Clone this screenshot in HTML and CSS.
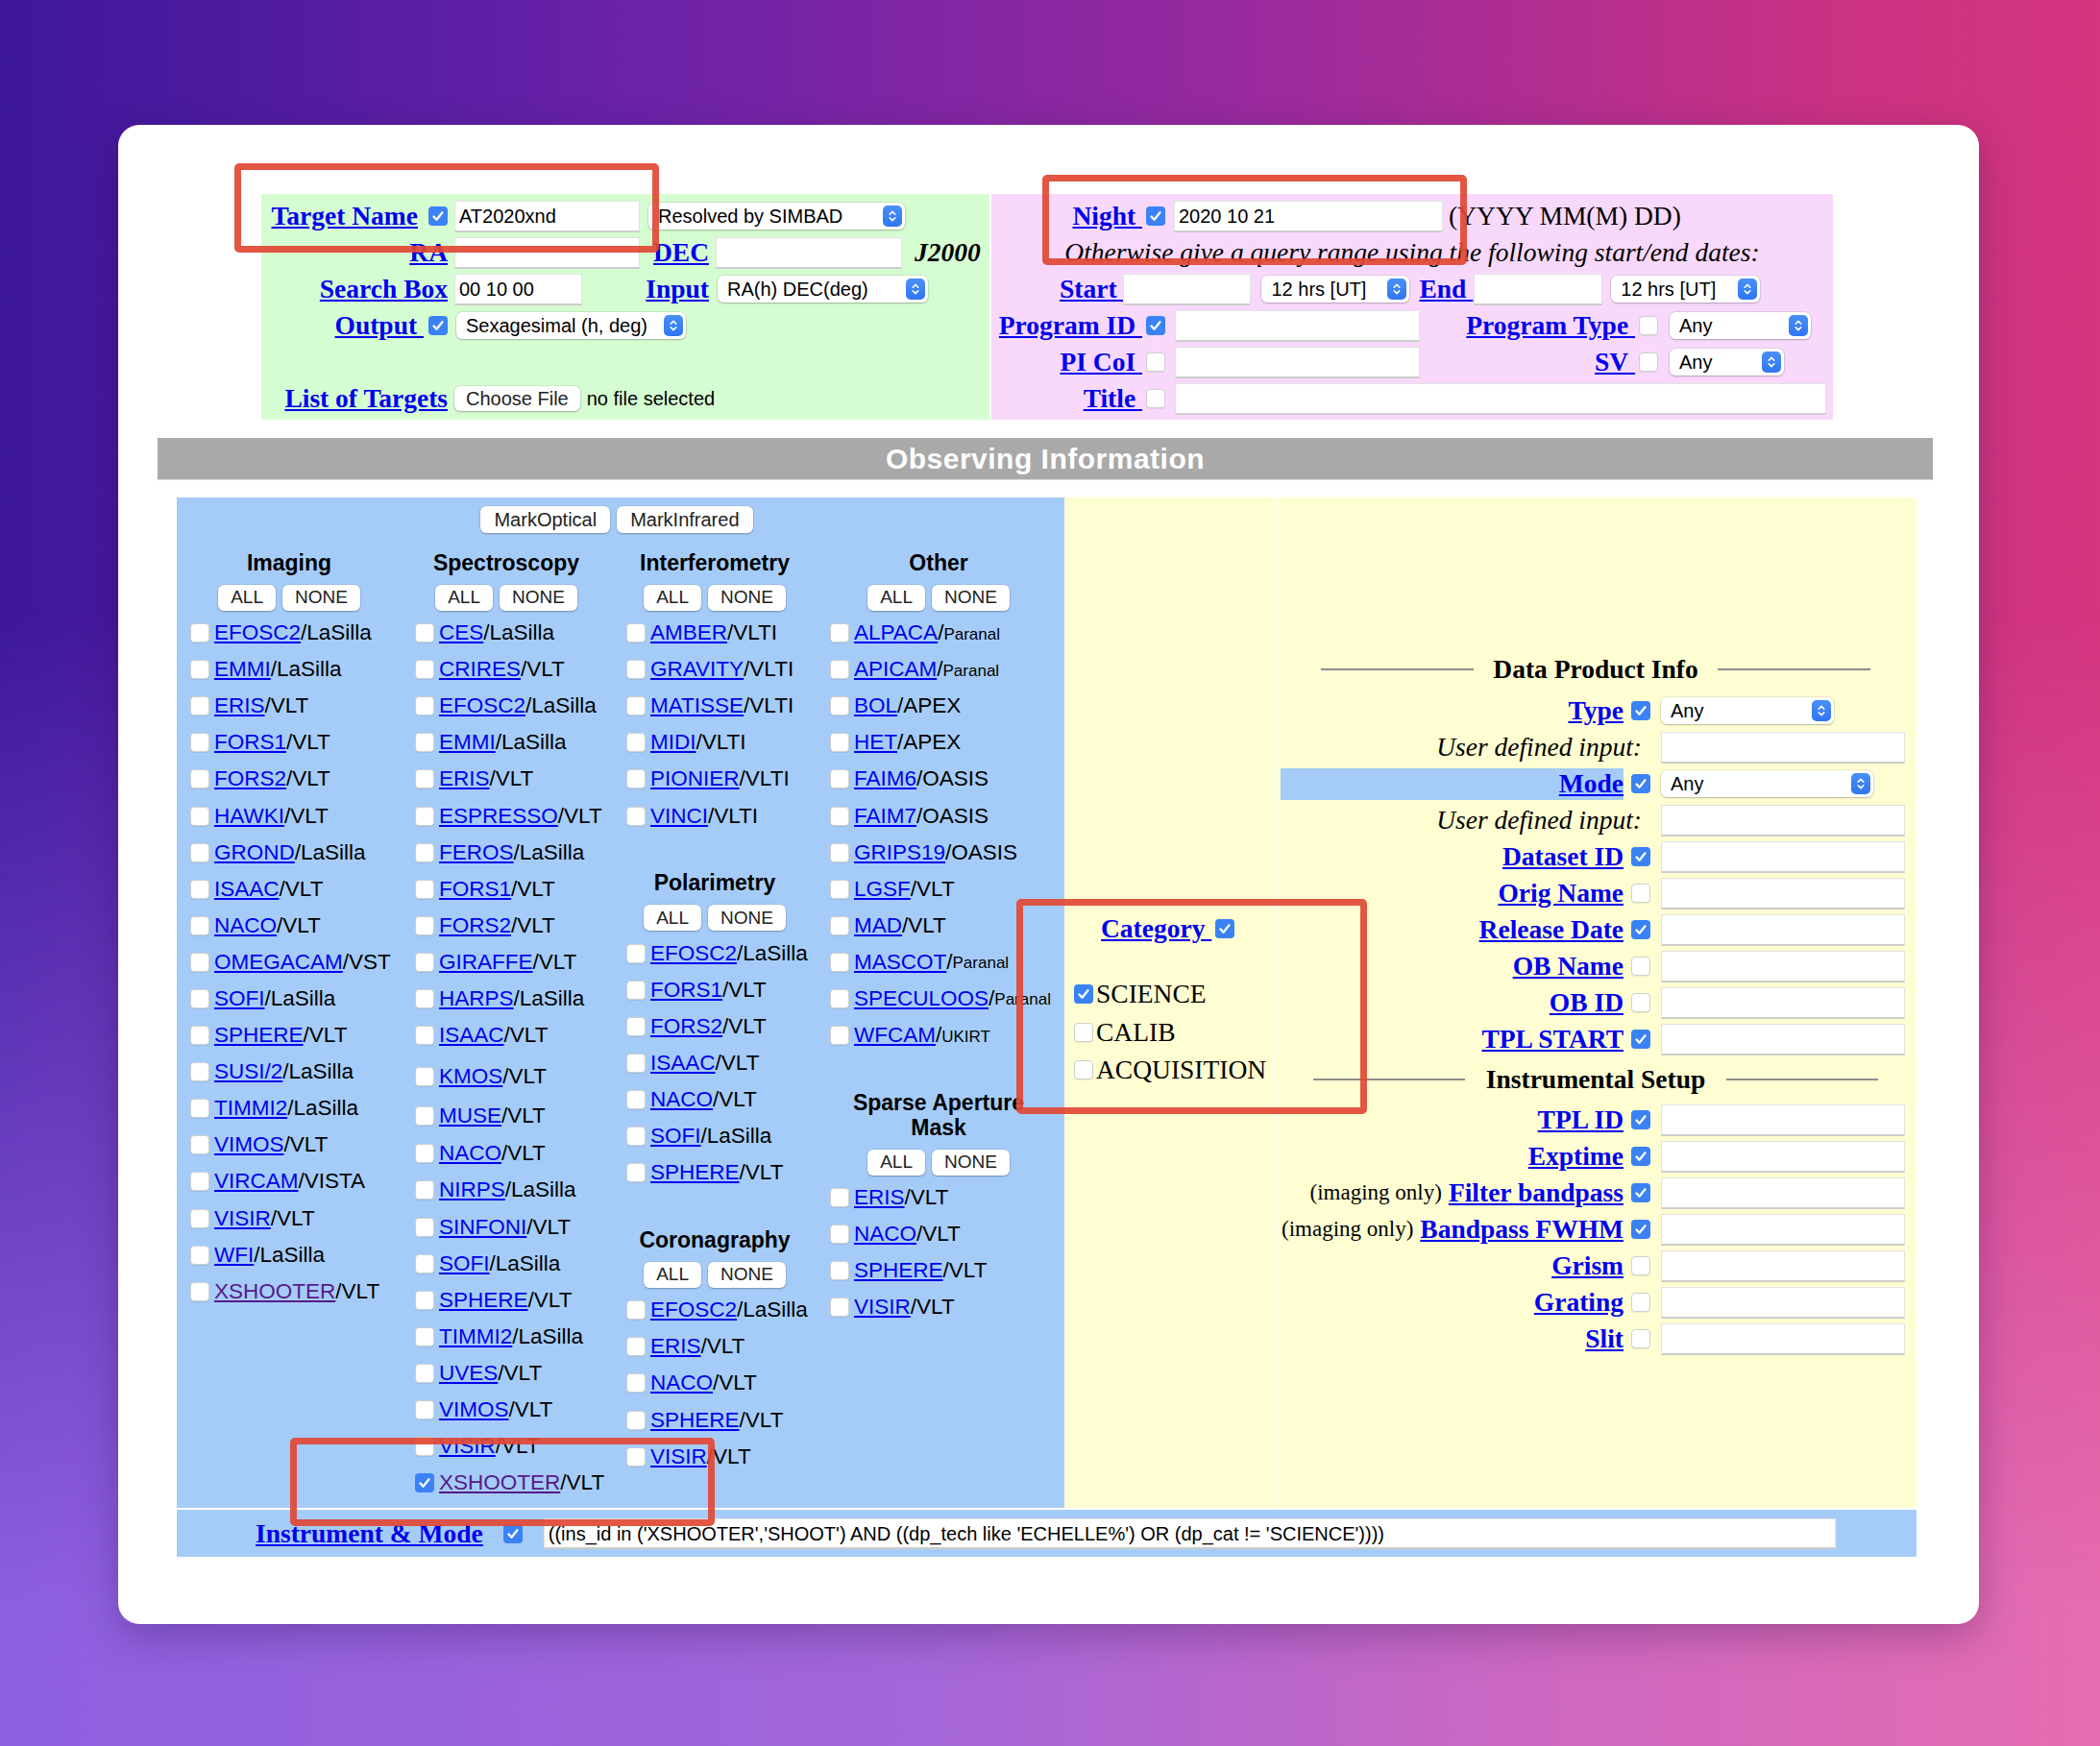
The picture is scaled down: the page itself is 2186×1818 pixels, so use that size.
FILE: index.html
```html
<!DOCTYPE html>
<html>
<head>
<meta charset="utf-8">
<title>ESO Archive Query Form</title>
<link rel="stylesheet" href="styles.css">
</head>
<body>
<div class="card">
  <div class="top">
    <div class="green">
      <div class="grow">
        <div class="glab"><a class="lbl">Target Name</a><span class="cb on ml11"><svg viewBox="0 0 20 20" width="20" height="20"><path d="M5.5 10.5l3 3.2 6-7.4" fill="none" stroke="#fff" stroke-width="2.3" stroke-linecap="round" stroke-linejoin="round"/></svg></span></div>
        <div class="inp ml5 w193">AT2020xnd</div>
        <div class="sel s3-6 ml5 w267">Resolved by SIMBAD<span class="step"><svg viewBox="0 0 10 16" width="10" height="16"><path d="M2.2 6.2L5 3.4l2.8 2.8M2.2 9.8L5 12.6l2.8-2.8" fill="none" stroke="#fff" stroke-width="1.6" stroke-linecap="round" stroke-linejoin="round"/></svg></span></div>
      </div>
      <div class="grow">
        <div class="glab"><a class="lbl">RA</a></div>
        <div class="inp ml5 w193"></div>
        <div class="glab"><a class="lbl">DEC</a></div>
        <div class="inp ml5 w194"></div>
        <div class="epoch ml7">J2000</div>
      </div>
      <div class="grow">
        <div class="glab"><a class="lbl">Search Box</a></div>
        <div class="inp ml5 w133">00 10 00</div>
        <div class="glab"><a class="lbl">Input</a></div>
        <div class="sel s4-6 ml7 w219">RA(h) DEC(deg)<span class="step"><svg viewBox="0 0 10 16" width="10" height="16"><path d="M2.2 6.2L5 3.4l2.8 2.8M2.2 9.8L5 12.6l2.8-2.8" fill="none" stroke="#fff" stroke-width="1.6" stroke-linecap="round" stroke-linejoin="round"/></svg></span></div>
      </div>
      <div class="grow">
        <div class="glab"><a class="lbl">Output&nbsp;</a><span class="cb on ml5"><svg viewBox="0 0 20 20" width="20" height="20"><path d="M5.5 10.5l3 3.2 6-7.4" fill="none" stroke="#fff" stroke-width="2.3" stroke-linecap="round" stroke-linejoin="round"/></svg></span></div>
        <div class="sel s2-6 ml7 w239">Sexagesimal (h, deg)<span class="step"><svg viewBox="0 0 10 16" width="10" height="16"><path d="M2.2 6.2L5 3.4l2.8 2.8M2.2 9.8L5 12.6l2.8-2.8" fill="none" stroke="#fff" stroke-width="1.6" stroke-linecap="round" stroke-linejoin="round"/></svg></span></div>
      </div>
      <div class="grow"></div>
      <div class="grow">
        <div class="glab"><a class="lbl">List of Targets</a></div>
        <div class="filepick s2-6 ml5"><span class="btn fbtn">Choose File</span><span class="nofile">no file selected</span></div>
      </div>
    </div>

    <div class="pink">
      <div class="prow">
        <div class="glab"><a class="lbl">Night&nbsp;</a><span class="cb on ml4"><svg viewBox="0 0 20 20" width="20" height="20"><path d="M5.5 10.5l3 3.2 6-7.4" fill="none" stroke="#fff" stroke-width="2.3" stroke-linecap="round" stroke-linejoin="round"/></svg></span></div>
        <div class="pspan"><div class="inp ml7 w280">2020 10 21</div><span class="fmt">(YYYY MM(M) DD)</span></div>
      </div>
      <div class="prow">
        <div class="hint">Otherwise give a query range using the following start/end dates:</div>
      </div>
      <div class="prow startrow">
        <a class="lbl">Start&nbsp;</a>
        <div class="inp w133"></div>
        <div class="sel ml11 w154">12 hrs [UT]<span class="step"><svg viewBox="0 0 10 16" width="10" height="16"><path d="M2.2 6.2L5 3.4l2.8 2.8M2.2 9.8L5 12.6l2.8-2.8" fill="none" stroke="#fff" stroke-width="1.6" stroke-linecap="round" stroke-linejoin="round"/></svg></span></div>
        <a class="lbl ml10">End&nbsp;</a>
        <div class="inp ml1 w134"></div>
        <div class="sel ml9 w155">12 hrs [UT]<span class="step"><svg viewBox="0 0 10 16" width="10" height="16"><path d="M2.2 6.2L5 3.4l2.8 2.8M2.2 9.8L5 12.6l2.8-2.8" fill="none" stroke="#fff" stroke-width="1.6" stroke-linecap="round" stroke-linejoin="round"/></svg></span></div>
      </div>
      <div class="prow">
        <div class="glab"><a class="lbl">Program ID&nbsp;</a><span class="cb on ml4"><svg viewBox="0 0 20 20" width="20" height="20"><path d="M5.5 10.5l3 3.2 6-7.4" fill="none" stroke="#fff" stroke-width="2.3" stroke-linecap="round" stroke-linejoin="round"/></svg></span></div>
        <div class="inp ml8 w255"></div>
        <div class="glab"><a class="lbl">Program Type&nbsp;</a><span class="cb ml4"></span></div>
        <div class="sel ml10 w147">Any<span class="step"><svg viewBox="0 0 10 16" width="10" height="16"><path d="M2.2 6.2L5 3.4l2.8 2.8M2.2 9.8L5 12.6l2.8-2.8" fill="none" stroke="#fff" stroke-width="1.6" stroke-linecap="round" stroke-linejoin="round"/></svg></span></div>
      </div>
      <div class="prow">
        <div class="glab"><a class="lbl">PI CoI&nbsp;</a><span class="cb ml4"></span></div>
        <div class="inp ml8 w255"></div>
        <div class="glab"><a class="lbl">SV&nbsp;</a><span class="cb ml4"></span></div>
        <div class="sel ml10 w119">Any<span class="step"><svg viewBox="0 0 10 16" width="10" height="16"><path d="M2.2 6.2L5 3.4l2.8 2.8M2.2 9.8L5 12.6l2.8-2.8" fill="none" stroke="#fff" stroke-width="1.6" stroke-linecap="round" stroke-linejoin="round"/></svg></span></div>
      </div>
      <div class="prow">
        <div class="glab"><a class="lbl">Title&nbsp;</a><span class="cb ml4"></span></div>
        <div class="pspan"><div class="inp ml8 w678"></div></div>
      </div>
    </div>
  </div>

  <div class="obs-head">Observing Information</div>

  <div class="panels">
    <div class="blue">
      <div class="marks"><span class="btn mbtn">MarkOptical</span><span class="btn mbtn">MarkInfrared</span></div>
      <div class="cols">
        <div class="col c1">
          <div class="ghead">Imaging</div>
          <div class="gbtns"><span class="btn">ALL</span><span class="btn">NONE</span></div>
          <div class="item"><span class="cb"></span><a>EFOSC2</a>/LaSilla</div>
          <div class="item"><span class="cb"></span><a>EMMI</a>/LaSilla</div>
          <div class="item"><span class="cb"></span><a>ERIS</a>/VLT</div>
          <div class="item"><span class="cb"></span><a>FORS1</a>/VLT</div>
          <div class="item"><span class="cb"></span><a>FORS2</a>/VLT</div>
          <div class="item"><span class="cb"></span><a>HAWKI</a>/VLT</div>
          <div class="item"><span class="cb"></span><a>GROND</a>/LaSilla</div>
          <div class="item"><span class="cb"></span><a>ISAAC</a>/VLT</div>
          <div class="item"><span class="cb"></span><a>NACO</a>/VLT</div>
          <div class="item"><span class="cb"></span><a>OMEGACAM</a>/VST</div>
          <div class="item"><span class="cb"></span><a>SOFI</a>/LaSilla</div>
          <div class="item"><span class="cb"></span><a>SPHERE</a>/VLT</div>
          <div class="item"><span class="cb"></span><a>SUSI/2</a>/LaSilla</div>
          <div class="item"><span class="cb"></span><a>TIMMI2</a>/LaSilla</div>
          <div class="item"><span class="cb"></span><a>VIMOS</a>/VLT</div>
          <div class="item"><span class="cb"></span><a>VIRCAM</a>/VISTA</div>
          <div class="item"><span class="cb"></span><a>VISIR</a>/VLT</div>
          <div class="item"><span class="cb"></span><a>WFI</a>/LaSilla</div>
          <div class="item"><span class="cb"></span><a class="vis">XSHOOTER</a>/VLT</div>
        </div>
        <div class="col c2">
          <div class="ghead">Spectroscopy</div>
          <div class="gbtns"><span class="btn">ALL</span><span class="btn">NONE</span></div>
          <div class="item"><span class="cb"></span><a>CES</a>/LaSilla</div>
          <div class="item"><span class="cb"></span><a>CRIRES</a>/VLT</div>
          <div class="item"><span class="cb"></span><a>EFOSC2</a>/LaSilla</div>
          <div class="item"><span class="cb"></span><a>EMMI</a>/LaSilla</div>
          <div class="item"><span class="cb"></span><a>ERIS</a>/VLT</div>
          <div class="item"><span class="cb"></span><a>ESPRESSO</a>/VLT</div>
          <div class="item"><span class="cb"></span><a>FEROS</a>/LaSilla</div>
          <div class="item"><span class="cb"></span><a>FORS1</a>/VLT</div>
          <div class="item"><span class="cb"></span><a>FORS2</a>/VLT</div>
          <div class="item"><span class="cb"></span><a>GIRAFFE</a>/VLT</div>
          <div class="item"><span class="cb"></span><a>HARPS</a>/LaSilla</div>
          <div class="item"><span class="cb"></span><a>ISAAC</a>/VLT</div>
          <div class="item mt5"><span class="cb"></span><a>KMOS</a>/VLT</div>
          <div class="item mt3"><span class="cb"></span><a>MUSE</a>/VLT</div>
          <div class="item mt1"><span class="cb"></span><a>NACO</a>/VLT</div>
          <div class="item"><span class="cb"></span><a>NIRPS</a>/LaSilla</div>
          <div class="item"><span class="cb"></span><a>SINFONI</a>/VLT</div>
          <div class="item"><span class="cb"></span><a>SOFI</a>/LaSilla</div>
          <div class="item"><span class="cb"></span><a>SPHERE</a>/VLT</div>
          <div class="item"><span class="cb"></span><a>TIMMI2</a>/LaSilla</div>
          <div class="item"><span class="cb"></span><a>UVES</a>/VLT</div>
          <div class="item"><span class="cb"></span><a>VIMOS</a>/VLT</div>
          <div class="item"><span class="cb"></span><a>VISIR</a>/VLT</div>
          <div class="item"><span class="cb on"><svg viewBox="0 0 20 20" width="20" height="20"><path d="M5.5 10.5l3 3.2 6-7.4" fill="none" stroke="#fff" stroke-width="2.3" stroke-linecap="round" stroke-linejoin="round"/></svg></span><a class="vis">XSHOOTER</a>/VLT</div>
        </div>
        <div class="col c3">
          <div class="ghead">Interferometry</div>
          <div class="gbtns"><span class="btn">ALL</span><span class="btn">NONE</span></div>
          <div class="item"><span class="cb"></span><a>AMBER</a>/VLTI</div>
          <div class="item"><span class="cb"></span><a>GRAVITY</a>/VLTI</div>
          <div class="item"><span class="cb"></span><a>MATISSE</a>/VLTI</div>
          <div class="item"><span class="cb"></span><a>MIDI</a>/VLTI</div>
          <div class="item"><span class="cb"></span><a>PIONIER</a>/VLTI</div>
          <div class="item"><span class="cb"></span><a>VINCI</a>/VLTI</div>
          <div class="ghead sub">Polarimetry</div>
          <div class="gbtns"><span class="btn">ALL</span><span class="btn">NONE</span></div>
          <div class="item"><span class="cb"></span><a>EFOSC2</a>/LaSilla</div>
          <div class="item"><span class="cb"></span><a>FORS1</a>/VLT</div>
          <div class="item"><span class="cb"></span><a>FORS2</a>/VLT</div>
          <div class="item"><span class="cb"></span><a>ISAAC</a>/VLT</div>
          <div class="item"><span class="cb"></span><a>NACO</a>/VLT</div>
          <div class="item"><span class="cb"></span><a>SOFI</a>/LaSilla</div>
          <div class="item"><span class="cb"></span><a>SPHERE</a>/VLT</div>
          <div class="ghead sub">Coronagraphy</div>
          <div class="gbtns"><span class="btn">ALL</span><span class="btn">NONE</span></div>
          <div class="item"><span class="cb"></span><a>EFOSC2</a>/LaSilla</div>
          <div class="item"><span class="cb"></span><a>ERIS</a>/VLT</div>
          <div class="item"><span class="cb"></span><a>NACO</a>/VLT</div>
          <div class="item"><span class="cb"></span><a>SPHERE</a>/VLT</div>
          <div class="item"><span class="cb"></span><a>VISIR</a>/VLT</div>
        </div>
        <div class="col c4">
          <div class="ghead">Other</div>
          <div class="gbtns"><span class="btn">ALL</span><span class="btn">NONE</span></div>
          <div class="item"><span class="cb"></span><a>ALPACA</a>/<small>Paranal</small></div>
          <div class="item"><span class="cb"></span><a>APICAM</a>/<small>Paranal</small></div>
          <div class="item"><span class="cb"></span><a>BOL</a>/APEX</div>
          <div class="item"><span class="cb"></span><a>HET</a>/APEX</div>
          <div class="item"><span class="cb"></span><a>FAIM6</a>/OASIS</div>
          <div class="item"><span class="cb"></span><a>FAIM7</a>/OASIS</div>
          <div class="item"><span class="cb"></span><a>GRIPS19</a>/OASIS</div>
          <div class="item"><span class="cb"></span><a>LGSF</a>/VLT</div>
          <div class="item"><span class="cb"></span><a>MAD</a>/VLT</div>
          <div class="item"><span class="cb"></span><a>MASCOT</a>/<small>Paranal</small></div>
          <div class="item"><span class="cb"></span><a>SPECULOOS</a>/<small>Paranal</small></div>
          <div class="item"><span class="cb"></span><a>WFCAM</a>/<small>UKIRT</small></div>
          <div class="ghead two">Sparse Aperture<br>Mask</div>
          <div class="gbtns mt5"><span class="btn">ALL</span><span class="btn">NONE</span></div>
          <div class="item"><span class="cb"></span><a>ERIS</a>/VLT</div>
          <div class="item"><span class="cb"></span><a>NACO</a>/VLT</div>
          <div class="item"><span class="cb"></span><a>SPHERE</a>/VLT</div>
          <div class="item"><span class="cb"></span><a>VISIR</a>/VLT</div>
        </div>
      </div>
    </div>

    <div class="yellow">
      <div class="cat">
        <div class="cat-row"><a class="lbl">Category&nbsp;</a><span class="cb on ml4"><svg viewBox="0 0 20 20" width="20" height="20"><path d="M5.5 10.5l3 3.2 6-7.4" fill="none" stroke="#fff" stroke-width="2.3" stroke-linecap="round" stroke-linejoin="round"/></svg></span></div>
        <div class="cat-opts">
          <div class="opt"><span class="cb on"><svg viewBox="0 0 20 20" width="20" height="20"><path d="M5.5 10.5l3 3.2 6-7.4" fill="none" stroke="#fff" stroke-width="2.3" stroke-linecap="round" stroke-linejoin="round"/></svg></span>SCIENCE</div>
          <div class="opt"><span class="cb"></span>CALIB</div>
          <div class="opt"><span class="cb"></span>ACQUISITION</div>
        </div>
      </div>
      <div class="dp">
        <div class="dhead"><span class="line"></span><span>Data Product Info</span><span class="line"></span></div>
        <div class="drow"><div class="dlab"><a class="lbl">Type</a></div><span class="cb on"><svg viewBox="0 0 20 20" width="20" height="20"><path d="M5.5 10.5l3 3.2 6-7.4" fill="none" stroke="#fff" stroke-width="2.3" stroke-linecap="round" stroke-linejoin="round"/></svg></span><div class="sel fld w180">Any<span class="step"><svg viewBox="0 0 10 16" width="10" height="16"><path d="M2.2 6.2L5 3.4l2.8 2.8M2.2 9.8L5 12.6l2.8-2.8" fill="none" stroke="#fff" stroke-width="1.6" stroke-linecap="round" stroke-linejoin="round"/></svg></span></div></div>
        <div class="drow"><div class="dlab ud">User defined input:</div><div class="inp fld2 w254"></div></div>
        <div class="drow"><div class="dlab hl"><a class="lbl">Mode</a></div><span class="cb on"><svg viewBox="0 0 20 20" width="20" height="20"><path d="M5.5 10.5l3 3.2 6-7.4" fill="none" stroke="#fff" stroke-width="2.3" stroke-linecap="round" stroke-linejoin="round"/></svg></span><div class="sel fld w221">Any<span class="step"><svg viewBox="0 0 10 16" width="10" height="16"><path d="M2.2 6.2L5 3.4l2.8 2.8M2.2 9.8L5 12.6l2.8-2.8" fill="none" stroke="#fff" stroke-width="1.6" stroke-linecap="round" stroke-linejoin="round"/></svg></span></div></div>
        <div class="drow"><div class="dlab ud">User defined input:</div><div class="inp fld2 w254"></div></div>
        <div class="drow"><div class="dlab"><a class="lbl">Dataset ID</a></div><span class="cb on"><svg viewBox="0 0 20 20" width="20" height="20"><path d="M5.5 10.5l3 3.2 6-7.4" fill="none" stroke="#fff" stroke-width="2.3" stroke-linecap="round" stroke-linejoin="round"/></svg></span><div class="inp fld w254"></div></div>
        <div class="drow"><div class="dlab"><a class="lbl">Orig Name</a></div><span class="cb"></span><div class="inp fld w254"></div></div>
        <div class="drow"><div class="dlab"><a class="lbl">Release Date</a></div><span class="cb on"><svg viewBox="0 0 20 20" width="20" height="20"><path d="M5.5 10.5l3 3.2 6-7.4" fill="none" stroke="#fff" stroke-width="2.3" stroke-linecap="round" stroke-linejoin="round"/></svg></span><div class="inp fld w254"></div></div>
        <div class="drow"><div class="dlab"><a class="lbl">OB Name</a></div><span class="cb"></span><div class="inp fld w254"></div></div>
        <div class="drow"><div class="dlab"><a class="lbl">OB ID</a></div><span class="cb"></span><div class="inp fld w254"></div></div>
        <div class="drow"><div class="dlab"><a class="lbl">TPL START</a></div><span class="cb on"><svg viewBox="0 0 20 20" width="20" height="20"><path d="M5.5 10.5l3 3.2 6-7.4" fill="none" stroke="#fff" stroke-width="2.3" stroke-linecap="round" stroke-linejoin="round"/></svg></span><div class="inp fld w254"></div></div>
        <div class="dhead is"><span class="line"></span><span>Instrumental Setup</span><span class="line"></span></div>
        <div class="drow"><div class="dlab"><a class="lbl">TPL ID</a></div><span class="cb on"><svg viewBox="0 0 20 20" width="20" height="20"><path d="M5.5 10.5l3 3.2 6-7.4" fill="none" stroke="#fff" stroke-width="2.3" stroke-linecap="round" stroke-linejoin="round"/></svg></span><div class="inp fld w254"></div></div>
        <div class="drow"><div class="dlab"><a class="lbl">Exptime</a></div><span class="cb on"><svg viewBox="0 0 20 20" width="20" height="20"><path d="M5.5 10.5l3 3.2 6-7.4" fill="none" stroke="#fff" stroke-width="2.3" stroke-linecap="round" stroke-linejoin="round"/></svg></span><div class="inp fld w254"></div></div>
        <div class="drow"><div class="dlab"><span class="note">(imaging only)</span><a class="lbl">Filter bandpass</a></div><span class="cb on"><svg viewBox="0 0 20 20" width="20" height="20"><path d="M5.5 10.5l3 3.2 6-7.4" fill="none" stroke="#fff" stroke-width="2.3" stroke-linecap="round" stroke-linejoin="round"/></svg></span><div class="inp fld w254"></div></div>
        <div class="drow"><div class="dlab"><span class="note">(imaging only)</span><a class="lbl">Bandpass FWHM</a></div><span class="cb on"><svg viewBox="0 0 20 20" width="20" height="20"><path d="M5.5 10.5l3 3.2 6-7.4" fill="none" stroke="#fff" stroke-width="2.3" stroke-linecap="round" stroke-linejoin="round"/></svg></span><div class="inp fld w254"></div></div>
        <div class="drow"><div class="dlab"><a class="lbl">Grism</a></div><span class="cb"></span><div class="inp fld w254"></div></div>
        <div class="drow"><div class="dlab"><a class="lbl">Grating</a></div><span class="cb"></span><div class="inp fld w254"></div></div>
        <div class="drow"><div class="dlab"><a class="lbl">Slit</a></div><span class="cb"></span><div class="inp fld w254"></div></div>
      </div>
    </div>
  </div>

  <div class="imbar">
    <a class="lbl">Instrument &amp; Mode</a>
    <span class="cb on ml21"><svg viewBox="0 0 20 20" width="20" height="20"><path d="M5.5 10.5l3 3.2 6-7.4" fill="none" stroke="#fff" stroke-width="2.3" stroke-linecap="round" stroke-linejoin="round"/></svg></span>
    <div class="inp ml22 w1345 h32">((ins_id in ('XSHOOTER','SHOOT') AND ((dp_tech like 'ECHELLE%') OR (dp_cat != 'SCIENCE'))))</div>
  </div>

  <div class="annot a1"></div>
  <div class="annot a2"></div>
  <div class="annot a3"></div>
  <div class="annot a4"></div>
</div>
</body>
</html>
```

FILE: styles.css
```css
* { box-sizing: border-box; }
html, body { margin: 0; padding: 0; }
body {
  position: relative;
  width: 2186px;
  height: 1818px;
  overflow: hidden;
  padding: 130px 0 0 123px;
  font-family: "Liberation Serif", "Times New Roman", serif;
  background: linear-gradient(90deg, #3d179b 0%, #6a22a8 30%, #9a2a9e 60%, #cb3282 88%, #d4357f 100%);
}
body::before {
  content: "";
  position: absolute;
  inset: 0;
  background: linear-gradient(90deg, #8d5fe0 0%, #a566d8 45%, #cf68c0 75%, #e56cb0 100%);
  -webkit-mask-image: linear-gradient(180deg, transparent 35%, #000 92%);
  mask-image: linear-gradient(180deg, transparent 35%, #000 92%);
}

.card {
  position: relative;
  width: 1937px;
  height: 1561px;
  background: #fff;
  border-radius: 22px;
  box-shadow: 0 12px 40px rgba(30, 0, 60, 0.28);
  padding-top: 72px;
}

/* generic controls */
a { color: #0000ee; text-decoration: underline; }
a.vis { color: #551a8b; }
.lbl {
  font-family: "Liberation Serif", "Times New Roman", serif;
  font-weight: bold;
  font-size: 27.5px;
  line-height: 1;
  white-space: nowrap;
  color: #0000ee;
}
.cb {
  display: inline-flex;
  flex-shrink: 0;
  width: 20px;
  height: 20px;
  border-radius: 4px;
  background: #fff;
  border: 1px solid #cfcfcf;
  box-shadow: 0 1px 1px rgba(0, 0, 0, 0.07);
}
.cb.on {
  background: #3a82f6;
  border: none;
  box-shadow: none;
}
.inp {
  display: flex;
  align-items: center;
  flex-shrink: 0;
  height: 33px;
  background: #fff;
  border: 1px solid #e2e2e2;
  border-bottom: 2px solid #cdcdcd;
  padding: 2px 0 0 4px;
  font-family: "Liberation Sans", Arial, sans-serif;
  font-size: 20px;
  color: #000;
  white-space: nowrap;
  overflow: hidden;
}
.sel {
  display: flex;
  align-items: center;
  justify-content: space-between;
  flex-shrink: 0;
  height: 28px;
  background: #fff;
  border-radius: 6px;
  box-shadow: 0 0 0 0.5px rgba(0, 0, 0, 0.14), 0 1px 2px rgba(0, 0, 0, 0.22);
  padding: 0 3px 0 10px;
  font-family: "Liberation Sans", Arial, sans-serif;
  font-size: 20px;
  color: #000;
  white-space: nowrap;
}
.step {
  display: flex;
  align-items: center;
  justify-content: center;
  width: 20px;
  height: 22px;
  border-radius: 5px;
  background: linear-gradient(#4a90f8, #2f76f2);
}
.btn {
  display: inline-flex;
  align-items: center;
  height: 27px;
  padding: 0 13px;
  background: #fff;
  border-radius: 6px;
  box-shadow: 0 0 0 0.5px rgba(0, 0, 0, 0.12), 0 1px 2px rgba(0, 0, 0, 0.25);
  font-family: "Liberation Sans", Arial, sans-serif;
  font-size: 19px;
  color: #222;
  white-space: nowrap;
}

/* spacing utilities */
.ml1 { margin-left: 1px; }
.ml4 { margin-left: 4px; }
.ml5 { margin-left: 5px; }
.ml7 { margin-left: 7px; }
.ml8 { margin-left: 8px; }
.ml9 { margin-left: 9px; }
.ml10 { margin-left: 10px; }
.ml11 { margin-left: 11px; }
.ml21 { margin-left: 21px; }
.ml22 { margin-left: 22px; }
.mt1 { margin-top: 1px; }
.mt3 { margin-top: 3px; }
.mt5 { margin-top: 5px; }
.w119 { width: 119px; }
.w133 { width: 133px; }
.w134 { width: 134px; }
.w147 { width: 147px; }
.w154 { width: 154px; }
.w155 { width: 155px; }
.w180 { width: 180px; }
.w193 { width: 193px; }
.w194 { width: 194px; }
.w219 { width: 219px; }
.w221 { width: 221px; }
.w239 { width: 239px; }
.w254 { width: 254px; }
.w255 { width: 255px; }
.w267 { width: 267px; }
.w280 { width: 280px; }
.w678 { width: 678px; }
.w1345 { width: 1345px; }
.h32 { height: 32px; }

/* top query area */
.top {
  display: flex;
  gap: 2px;
  margin-left: 149px;
  height: 235px;
}
.green {
  width: 758px;
  height: 235px;
  background: #d6fcd2;
  padding-top: 4px;
}
.grow {
  display: grid;
  grid-template-columns: 196px 202px 70px 205px 85px;
  align-items: center;
  height: 38px;
}
.glab {
  display: flex;
  justify-content: flex-end;
  align-items: center;
  padding-right: 2px;
}
.s2-6 { grid-column: 2 / 6; }
.s3-6 { grid-column: 3 / 6; }
.s4-6 { grid-column: 4 / 6; }
.epoch {
  font-weight: bold;
  font-style: italic;
  font-size: 27.5px;
  line-height: 1;
}
.filepick {
  display: flex;
  align-items: center;
}
.fbtn {
  height: 26px;
  padding: 0 12px;
  font-size: 20px;
}
.nofile {
  margin-left: 7px;
  font-family: "Liberation Sans", Arial, sans-serif;
  font-size: 20px;
}

.pink {
  width: 876px;
  height: 235px;
  background: #f8d9fb;
  padding-top: 4px;
}
.prow {
  display: grid;
  grid-template-columns: 183px 263px 250px 180px;
  align-items: center;
  height: 38px;
}
.pspan {
  grid-column: 2 / 5;
  display: flex;
  align-items: center;
}
.fmt {
  margin-left: 6px;
  font-size: 27.5px;
  line-height: 1;
  white-space: nowrap;
}
.hint {
  grid-column: 1 / -1;
  text-align: center;
  font-style: italic;
  font-size: 27.5px;
  line-height: 1;
  white-space: nowrap;
}
.startrow {
  display: flex;
  padding-left: 71px;
}

/* observing header */
.obs-head {
  margin: 19px 0 0 41px;
  width: 1848px;
  height: 43px;
  background: #a9a9a9;
  box-shadow: 0 1px 0 #dcdcdc;
  color: #fff;
  text-align: center;
  font-family: "Liberation Sans", Arial, sans-serif;
  font-weight: bold;
  font-size: 30px;
  letter-spacing: 0.5px;
  line-height: 43px;
}

/* panels */
.panels {
  display: flex;
  margin: 19px 0 0 61px;
  height: 1052px;
}
.blue {
  width: 924px;
  background: #a5ccf8;
  padding-top: 9px;
}
.marks {
  display: flex;
  justify-content: center;
  gap: 7px;
  padding-right: 8px;
  margin-bottom: 13px;
}
.mbtn {
  height: 28px;
  padding: 0 14px;
  font-size: 20px;
}
.cols { display: flex; }
.col { display: flex; flex-direction: column; }
.c1 { width: 234px; }
.c2 { width: 218px; }
.c3 { width: 216px; }
.c4 { width: 250px; }
.ghead {
  height: 36px;
  display: flex;
  align-items: center;
  justify-content: center;
  font-family: "Liberation Sans", Arial, sans-serif;
  font-weight: bold;
  font-size: 23px;
  color: #000;
  white-space: nowrap;
}
.ghead.sub { margin-top: 33px; }
.ghead.two {
  display: block;
  height: 52px;
  margin-top: 38px;
  line-height: 26px;
  text-align: center;
}
.gbtns {
  height: 36px;
  display: flex;
  align-items: center;
  justify-content: center;
  gap: 7px;
}
.item {
  height: 38.1px;
  display: flex;
  align-items: center;
  font-family: "Liberation Sans", Arial, sans-serif;
  font-size: 22.5px;
  color: #000;
  white-space: nowrap;
}
.item .cb { margin-right: 5px; }
.item small { font-size: 17px; padding-top: 3px; }
.c1 .item { padding-left: 14px; }
.c2 .item { padding-left: 14px; }
.c3 .item { padding-left: 16px; }
.c4 .item { padding-left: 12px; }

.yellow {
  display: flex;
  width: 887px;
  background: #fffed2;
}
.cat {
  width: 219px;
  border-right: 1px solid #ffffff;
  padding-top: 430px;
}
.cat-row {
  height: 38px;
  display: flex;
  align-items: center;
  padding-left: 38px;
}
.cat-opts { margin-top: 29px; }
.opt {
  height: 39.7px;
  display: flex;
  align-items: center;
  padding-left: 10px;
  font-size: 27.5px;
  color: #000;
  white-space: nowrap;
}
.opt .cb { margin-right: 3px; }

.dp {
  width: 668px;
  padding-top: 155px;
}
.dhead {
  height: 48px;
  display: flex;
  align-items: center;
  justify-content: center;
  gap: 20px;
  font-weight: bold;
  font-size: 27.5px;
  color: #000;
  white-space: nowrap;
}
.dhead .line {
  width: 159px;
  height: 2px;
  background: #8c8c8c;
}
.dhead.is { height: 46px; gap: 22px; }
.dhead.is .line { width: 158px; }
.drow {
  height: 38px;
  display: flex;
  align-items: center;
}
.dlab {
  width: 363px;
  height: 33px;
  display: flex;
  justify-content: flex-end;
  align-items: center;
  white-space: nowrap;
}
.dlab.hl {
  width: 357px;
  margin-left: 6px;
  background: #a5ccf8;
}
.dlab.ud {
  width: 393px;
  padding-right: 11px;
  font-style: italic;
  font-size: 27.5px;
  color: #000;
}
.drow .cb { margin-left: 8px; }
.fld { margin-left: 11px; }
.fld2 { margin-left: 9px; }
.note {
  font-size: 23px;
  color: #000;
  margin-right: 7px;
}

/* instrument & mode bar */
.imbar {
  display: flex;
  align-items: center;
  margin: 2px 0 0 61px;
  width: 1811px;
  height: 49px;
  background: #a5ccf8;
  padding-left: 82px;
}

/* red annotation boxes drawn over the screenshot */
.annot {
  position: absolute;
  border: 7px solid rgba(225, 72, 52, 0.92);
  border-radius: 5px;
  pointer-events: none;
}
.a1 { left: 121px; top: 40px; width: 442px; height: 93px; }
.a2 { left: 962px; top: 52px; width: 442px; height: 94px; }
.a3 { left: 935px; top: 806px; width: 365px; height: 224px; }
.a4 { left: 179px; top: 1367px; width: 442px; height: 92px; }
```
